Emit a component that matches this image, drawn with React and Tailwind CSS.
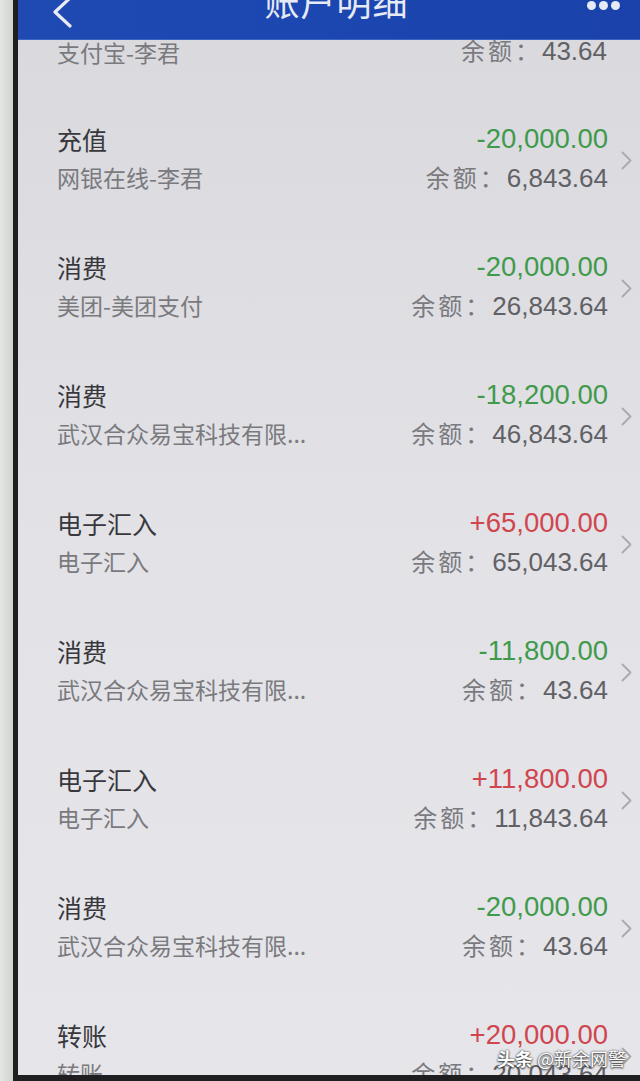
import React from "react";

// ================= DATA =================

const rows = [
  { title: "充值", amount: "-20,000.00", sub: "网银在线-李君", balance: "6,843.64" },
  { title: "消费", amount: "-20,000.00", sub: "美团-美团支付", balance: "26,843.64" },
  { title: "消费", amount: "-18,200.00", sub: "武汉合众易宝科技有限...", balance: "46,843.64" },
  { title: "电子汇入", amount: "+65,000.00", sub: "电子汇入", balance: "65,043.64" },
  { title: "消费", amount: "-11,800.00", sub: "武汉合众易宝科技有限...", balance: "43.64" },
  { title: "电子汇入", amount: "+11,800.00", sub: "电子汇入", balance: "11,843.64" },
  { title: "消费", amount: "-20,000.00", sub: "武汉合众易宝科技有限...", balance: "43.64" },
  { title: "转账", amount: "+20,000.00", sub: "转账", balance: "20,043.64" },
];

const cjk = { fontFamily: '"Noto Sans CJK SC", "Noto Sans", sans-serif' };
const num = { fontFamily: '"Liberation Sans", Arial, sans-serif' };

// ================= COMPONENT =================

export default function App() {
  return (
    <div className="relative flex h-[1081px] w-[640px] overflow-hidden bg-[#dfe2df]" style={cjk}>
      {/* phone bezel */}
      <div className="w-[13px] shrink-0 bg-gradient-to-r from-[#e4e7e4] to-[#cfd3cf]" />
      <div className="w-[5px] shrink-0 bg-[#1f1f22]" />

      <div className="flex min-w-0 flex-1 flex-col">
        {/* Header */}
        <div className="flex h-[40px] shrink-0 items-start justify-between border-b border-[#3a64c4] bg-gradient-to-r from-[#1f4ab2] via-[#1c46b0] to-[#1a42aa] pl-[32px] pr-[20px]">
          <svg width="24" height="30" viewBox="0 0 24 30" className="-mt-[2px]">
            <polyline points="20,0 5,14 20,28" fill="none" stroke="#e8ecf6" strokeWidth="3.2" strokeLinecap="round" strokeLinejoin="round" />
          </svg>
          <div className="-mt-[17px] ml-[12px] text-[35px] leading-[36px] tracking-[1px] text-[#e6eaf4]">账户明细</div>
          <div className="mt-[1px] flex gap-[3px]">
            <span className="h-[9px] w-[9px] rounded-full bg-[#e6eaf4]" />
            <span className="h-[9px] w-[9px] rounded-full bg-[#e6eaf4]" />
            <span className="h-[9px] w-[9px] rounded-full bg-[#e6eaf4]" />
          </div>
        </div>

        {/* List */}
        <div className="flex-1 overflow-hidden bg-gradient-to-b from-[#d9d9de] via-[#e2e2e7] to-[#e6e5ea]">
          {/* partial row */}
          <div className="flex h-[50px] items-start pl-[39px] pr-[33px]">
            <div className="mt-[-3px] flex-1 text-[23px] leading-[30px] text-[#7a7a7e]">支付宝-李君</div>
            <div className="mt-[-5px]">
              <Balance value="43.64" />
            </div>
          </div>

          {rows.map((r, i) => (
            <Row key={i} {...r} />
          ))}
        </div>

        <div className="h-[6px] shrink-0 bg-[#1f1f22]" />
      </div>

      {/* watermark */}
      <div
        className="absolute bottom-[12px] right-[14px] text-[18px] leading-[22px] text-white"
        style={{ textShadow: "0 0 2px #333, 0 1px 2px #333" }}
      >
        <span className="font-bold">头条</span> @新余网警
      </div>
    </div>
  );
}

// ================= Row =================

const Row = ({ title, amount, sub, balance }) => {
  const plus = amount.startsWith("+");
  return (
    <div className="flex h-[128px] items-start pl-[39px]">
      <div className="flex min-w-0 flex-1 flex-col pt-[33px]">
        <div className="text-[25px] leading-[32px] text-[#38383c]">{title}</div>
        <div className="mt-[7px] text-[23px] leading-[30px] text-[#7a7a7e]">{sub}</div>
      </div>
      <div className="flex flex-col items-end pt-[33px]">
        <div
          className={`text-[27.5px] leading-[32px] ${plus ? "text-[#d0464f]" : "text-[#3f9a4c]"}`}
          style={num}
        >
          {amount}
        </div>
        <div className="mt-[7px]">
          <Balance value={balance} />
        </div>
      </div>
      <div className="ml-[13px] mr-[8px] flex h-[128px] w-[11px] items-start pt-[61px]">
        <svg width="11" height="19" viewBox="0 0 11 19">
          <polyline points="1.5,1.5 9.5,9.5 1.5,17.5" fill="none" stroke="#a9a9ae" strokeWidth="1.8" strokeLinecap="round" strokeLinejoin="round" />
        </svg>
      </div>
    </div>
  );
};

const Balance = ({ value }) => (
  <div className="flex items-baseline whitespace-nowrap leading-[30px]">
    <span className="text-[24px] tracking-[3px] text-[#7a7a7e]">余额：</span>
    <span className="text-[26px] text-[#616165]" style={num}>
      {value}
    </span>
  </div>
);
